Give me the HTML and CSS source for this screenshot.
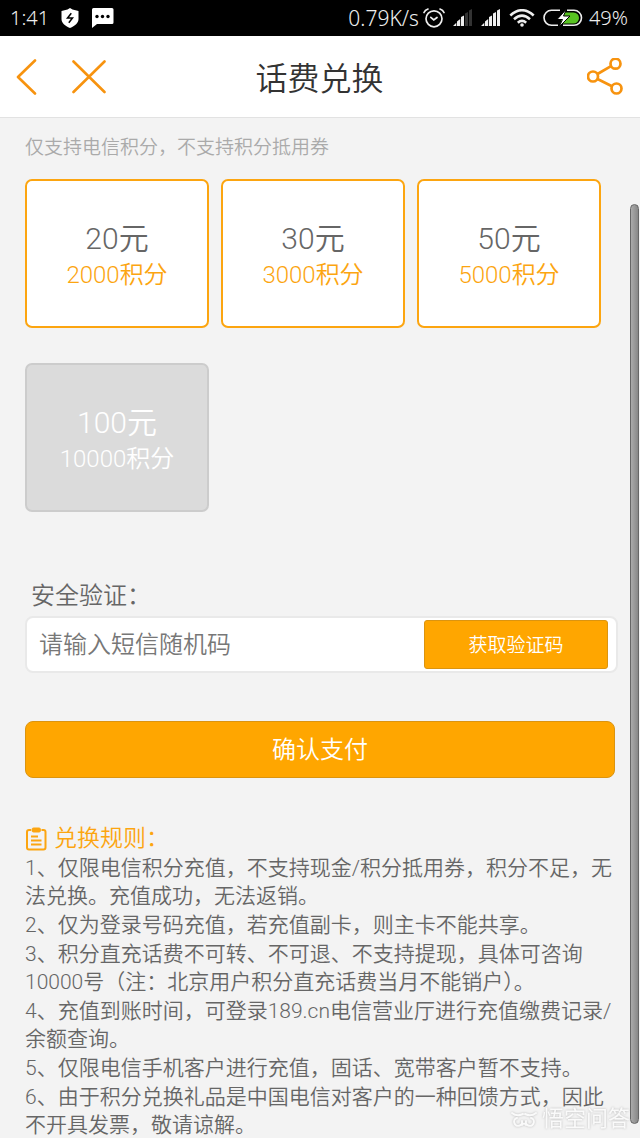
FILE: index.html
```html
<!DOCTYPE html>
<html lang="zh-CN">
<head>
<meta charset="utf-8">
<meta name="viewport" content="width=device-width, initial-scale=1">
<title>话费兑换</title>
<link rel="stylesheet" href="styles.css">
</head>
<body>
<div class="status">
  <div class="status-left">
    <span>1:41</span>
    <svg class="shield" width="18" height="20" viewBox="0 0 18 20" aria-hidden="true"><path fill="#fff" d="M9 0 11.500 1.500 17.500 3V11C17.500 15 14 18 9 20 4 18 .5 15 .5 11V3L6.500 1.500Z"/><path fill="none" stroke="#000" stroke-width="1.500" d="M10.300 5.200 6.500 10h5L7.800 14.800"/></svg>
    <svg width="22" height="20" viewBox="0 0 22 20" aria-hidden="true"><path fill="#fff" d="M1.500 0h18.500q1.500 0 1.500 1.500v13q0 1.500-1.500 1.500H5L0 20V1.500Q0 0 1.500 0Z"/><g fill="#000"><circle cx="5" cy="8.500" r="1.700"/><circle cx="10.500" cy="8.500" r="1.700"/><circle cx="16" cy="8.500" r="1.700"/></g></svg>
  </div>
  <div class="status-right">
    <span class="speed">0.79K/s</span>
    <svg class="alarm" width="22" height="20" viewBox="0 0 22 20" fill="none" stroke="#eee" stroke-width="1.700" stroke-linecap="round" aria-hidden="true"><circle cx="11" cy="10.800" r="8"/><path d="M1 4.500Q2 2 5 1M21 4.500Q20 2 17 1M7.800 9.300 10.800 12l3.200-2.500"/></svg>
    <svg class="signal" width="20" height="18" viewBox="0 0 20 18" aria-hidden="true"><path fill="#eee" d="M0 17l3.300-3.300V17zM4 17v-4.500l3.200-2.500v7zM8 17V8l3-1.500V17z"/><path fill="#333" d="M12 17V4.500L15 3V17zM16 17V1.500L19 0v17z"/></svg>
    <svg class="signal" width="20" height="18" viewBox="0 0 20 18" aria-hidden="true"><path fill="#eee" d="M0 17l3.300-3.300V17zM4 17v-4.500l3.200-2.500v7zM8 17V8l3-1.500V17zM12 17V4.500L15 3V17zM16 17V1.500L19 0v17z"/></svg>
    <svg class="wifi" width="26" height="18" viewBox="0 0 26 18" fill="none" stroke="#eee" stroke-width="2.600" aria-hidden="true"><path d="M1.300 6.500Q13-4 24.700 6.500M5 10.200q8-7 16 0M8.800 13.700q4.200-3.600 8.400 0"/><circle cx="13" cy="16" r="1.800" fill="#eee" stroke="none"/></svg>
    <svg class="battery" width="40" height="18" viewBox="0 0 40 18" aria-hidden="true"><path fill="#58c322" d="M20 3.500h10.500a5.500 5.500 0 0 1 0 11H17.500Z"/><path fill="none" stroke="#eee" stroke-width="1.600" d="M17 1.300H8.500a7.500 7.500 0 0 0 0 15H15M24 1.300h7a7.500 7.500 0 0 1 0 15H20"/><path fill="#fff" stroke="#000" stroke-width="1" d="M23.500 0 14 10.500h5.500L16 18l11-11h-6.500Z"/></svg>
    <span>49%</span>
  </div>
</div>

<header class="header">
  <div class="header-actions">
    <button class="icon-button" type="button" aria-label="返回"><svg width="22" height="36" viewBox="0 0 22 36" fill="none" stroke="#f7930f" stroke-width="2.600" stroke-linecap="round" stroke-linejoin="round"><path d="M19 1.500 2 18l17 16.500"/></svg></button>
    <button class="icon-button" type="button" aria-label="关闭"><svg width="34" height="36" viewBox="0 0 34 36" fill="none" stroke="#f7930f" stroke-width="2.600" stroke-linecap="round"><path d="M1.500 2.500 32.500 33M32.500 2.500 1.500 33"/></svg></button>
  </div>
  <h1 class="title">话费兑换</h1>
  <button class="icon-button share" type="button" aria-label="分享"><svg width="36" height="38" viewBox="0 0 36 38" fill="none" stroke="#f7930f" stroke-width="2.700"><circle cx="6" cy="18.500" r="5"/><circle cx="28.500" cy="5.700" r="5"/><circle cx="29.500" cy="30.500" r="5"/><path d="M10.500 16 24 8.200M10.500 21 25 28.200"/></svg></button>
</header>

<main class="content">
  <p class="notice">仅支持电信积分，不支持积分抵用券</p>
  <div class="amounts">
    <button class="amount" type="button"><span class="price">20元</span><span class="points">2000积分</span></button>
    <button class="amount" type="button"><span class="price">30元</span><span class="points">3000积分</span></button>
    <button class="amount" type="button"><span class="price">50元</span><span class="points">5000积分</span></button>
    <button class="amount" type="button" disabled><span class="price">100元</span><span class="points">10000积分</span></button>
  </div>

  <form class="verify">
    <label class="verify-label" for="code">安全验证：</label>
    <div class="code-row">
      <input class="code-input" id="code" type="text" placeholder="请输入短信随机码">
      <button class="code-button" type="button">获取验证码</button>
    </div>
    <button class="submit" type="submit">确认支付</button>
  </form>

  <section class="rules">
    <h2 class="rules-title"><svg width="22" height="24" viewBox="0 0 22 24" fill="none" stroke="#fca510" stroke-width="2" aria-hidden="true"><path d="M6 3H4Q2 3 2 5v15.500Q2 22.500 4 22.500h14.500q2 0 2-2V5q0-2-2-2h-2"/><path d="M6 9.500h7M6 13.500h10.500M6 17.500h10.500"/><rect x="7" y="1" width="8.500" height="4" rx="1.500" fill="#fca510" stroke-width="1"/></svg>兑换规则：</h2>
    <p>1、仅限电信积分充值，不支持现金/积分抵用券，积分不足，无法兑换。充值成功，无法返销。</p>
    <p>2、仅为登录号码充值，若充值副卡，则主卡不能共享。</p>
    <p>3、积分直充话费不可转、不可退、不支持提现，具体可咨询10000号（注：北京用户积分直充话费当月不能销户）。</p>
    <p>4、充值到账时间，可登录189.cn电信营业厅进行充值缴费记录/余额查询。</p>
    <p>5、仅限电信手机客户进行充值，固话、宽带客户暂不支持。</p>
    <p>6、由于积分兑换礼品是中国电信对客户的一种回馈方式，因此不开具发票，敬请谅解。</p>
  </section>
</main>

<div class="scroll-thumb" aria-hidden="true"></div>
<div class="watermark">
  <svg width="28" height="18" viewBox="0 0 28 18" fill="none" stroke="#fafafa" stroke-width="2" stroke-linecap="round" aria-hidden="true"><path d="M2 3q5 4 11 1M26 3q-5 4-11 1M7 8a4 4 0 1 0 5 3M21 8a4 4 0 1 1-5 3M12 15q2-3 4 0"/></svg>
  <span>悟空问答</span>
</div>
</body>
</html>
```
FILE: styles.css
```css
* {
  box-sizing: border-box;
}

html {
  scrollbar-width: none;
}

body {
  position: relative;
  min-height: 100vh;
  margin: 0;
  background: #f3f3f3;
  color: #666;
  font-family: Roboto, "Noto Sans CJK SC", sans-serif;
  font-weight: 350;
}

h1,
h2,
p {
  margin: 0;
  font-weight: inherit;
}

button,
input {
  margin: 0;
  padding: 0;
  border: 0;
  background: none;
  color: inherit;
  font: inherit;
}

svg {
  display: block;
  flex: none;
}

.status {
  display: flex;
  justify-content: space-between;
  height: 36px;
  padding: 0 12px 0 10px;
  background: #000;
  color: #eee;
  font-family: "Noto Sans", sans-serif;
  font-size: 20px;
  line-height: 36px;
}

.status-left,
.status-right {
  display: flex;
  align-items: center;
}

.speed {
  font-size: 21px;
}

.shield {
  margin: 0 13px 0 12px;
}

.alarm {
  margin: 0 8px 0 4px;
}

.signal {
  margin-right: 8px;
}

.battery {
  margin: 0 6px 0 8px;
}

.header {
  display: grid;
  grid-template-columns: 1fr auto 1fr;
  align-items: center;
  height: 82px;
  padding: 0 17px 0 16px;
  border-bottom: 1px solid #e2e2e2;
  background: #fff;
}

.header-actions {
  display: flex;
  gap: 34px;
}

.share {
  justify-self: end;
}

.title {
  padding-top: 4px;
  color: #333;
  font-size: 32px;
  line-height: 40px;
}

.content {
  padding: 15px 22px 0 25px;
}

.notice {
  color: #aaa;
  font-size: 19px;
  line-height: 30px;
}

.amounts {
  display: grid;
  grid-template-columns: repeat(3, 1fr);
  gap: 35px 12px;
  margin: 16px 17px 0 0;
}

.amount {
  display: flex;
  flex-direction: column;
  align-items: center;
  height: 149px;
  padding-top: 40px;
  border: 2px solid #fca510;
  border-radius: 7px;
  background: #fff;
}

.amount:disabled {
  border-color: #ccc;
  background: #dbdbdb;
}

.price {
  font-size: 30px;
  line-height: 36px;
}

.points {
  color: #fca510;
  font-size: 24px;
  line-height: 36px;
}

.amount:disabled span {
  color: #fff;
}

.verify {
  margin-top: 66px;
}

.verify-label {
  display: block;
  padding-left: 6px;
  font-size: 24px;
  line-height: 36px;
}

.code-row {
  display: flex;
  align-items: center;
  height: 57px;
  margin-top: 2px;
  padding: 0 8px 0 12px;
  border: 2px solid #e9e9e9;
  border-radius: 8px;
  background: #fff;
}

.code-input {
  flex: 1;
  min-width: 0;
  font-size: 24px;
  line-height: 36px;
}

.code-input::placeholder {
  color: #777;
  opacity: 1;
}

.code-button {
  width: 184px;
  height: 49px;
  padding-bottom: 3px;
  border: 1px solid #db9410;
  border-radius: 3px;
  background: #ffa600;
  color: #fff;
  font-size: 19px;
}

.submit {
  display: block;
  width: calc(100% - 3px);
  height: 57px;
  margin-top: 48px;
  padding-bottom: 4px;
  border: 1px solid #db9410;
  border-radius: 8px;
  background: #ffa600;
  color: #fff;
  font-size: 24px;
}

.rules {
  margin-top: 46px;
  font-size: 21px;
  line-height: 28px;
}

.rules p + p {
  margin-top: 1px;
}

.rules-title {
  display: flex;
  align-items: center;
  gap: 7px;
  color: #fca510;
  font-size: 23px;
  line-height: 30px;
}

.scroll-thumb {
  position: absolute;
  top: 204px;
  right: 1px;
  bottom: 15px;
  width: 9px;
  border: 1px solid #666;
  border-radius: 5px;
  background: linear-gradient(to right, #aaa, #888);
}

.watermark {
  position: absolute;
  right: 10px;
  bottom: 4px;
  display: flex;
  align-items: center;
  gap: 4px;
  color: #fafafa;
  font-size: 22px;
  font-weight: 400;
  line-height: 32px;
  filter: drop-shadow(0 0 1px #bbb);
}
```
